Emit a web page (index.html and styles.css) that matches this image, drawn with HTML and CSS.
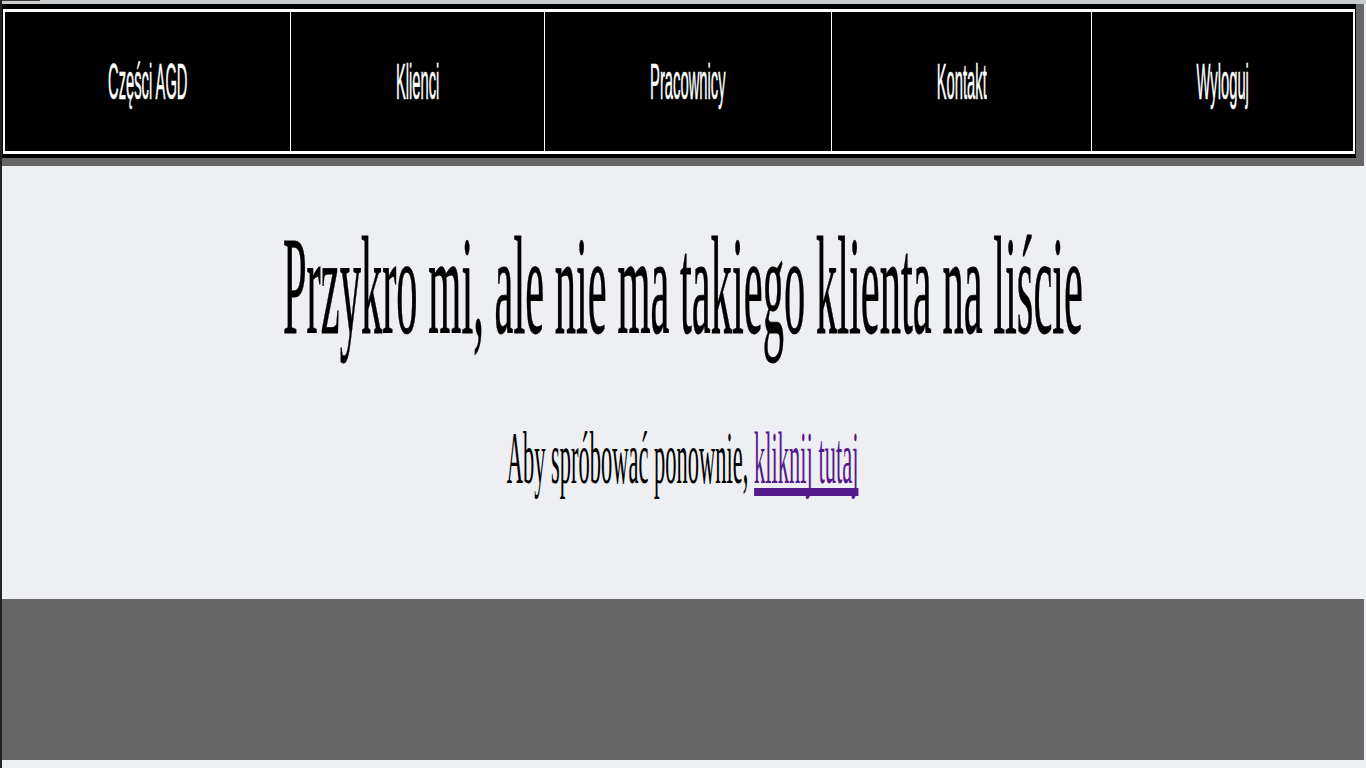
FILE: index.html
```html
<!DOCTYPE html>
<html lang="pl">
<head>
<meta charset="utf-8">
<title>Brak klienta</title>
<link rel="stylesheet" href="styles.css">
</head>
<body>
<div class="edge"></div>
<div class="page">
  <div class="topstrip"><div class="tab"></div></div>
  <div class="content">
    <header class="header">
      <nav class="nav">
        <div class="nav-grid">
          <a class="nav-item" href="#"><span class="squeeze">Części AGD</span></a>
          <a class="nav-item" href="#"><span class="squeeze">Klienci</span></a>
          <a class="nav-item" href="#"><span class="squeeze">Pracownicy</span></a>
          <a class="nav-item" href="#"><span class="squeeze">Kontakt</span></a>
          <a class="nav-item" href="#"><span class="squeeze">Wyloguj</span></a>
        </div>
      </nav>
    </header>
    <main class="main">
      <h1 class="title"><span class="squeeze squeeze-wide">Przykro mi, ale nie ma takiego klienta na liście</span></h1>
      <p class="retry"><span class="squeeze squeeze-wide">Aby spróbować ponownie, <a class="link" href="#">kliknij tutaj</a></span></p>
    </main>
    <footer class="footer"></footer>
  </div>
</div>
</body>
</html>
```
FILE: styles.css
```css
html, body {
  margin: 0;
  padding: 0;
}
body {
  background: #eeeff2;
  display: flex;
  min-height: 100vh;
  overflow: hidden;
}
.edge {
  width: 2px;
  flex: none;
  background: #1f2326;
}
.page {
  flex: 1;
  min-width: 0;
  overflow: hidden;
}
.topstrip {
  height: 4px;
  background: #c9cccf;
}
.tab {
  width: 38px;
  height: 1px;
  background: #3a3a3a;
}
.content {
  margin-right: 2px;
}
.header {
  background: #666666;
  padding: 0 8px 8px 0;
}
.nav {
  background: #000;
  padding: 5px 1px 4px 1px;
}
.nav-grid {
  display: grid;
  grid-template-columns: 285fr 254fr 287fr 260fr 262fr;
  border: 2px solid #fff;
  border-top-width: 3px;
  border-bottom-width: 3px;
  height: 139px;
}
.nav-item {
  display: flex;
  align-items: center;
  justify-content: center;
  overflow: visible;
  color: #fff;
  text-decoration: none;
  font-family: "Liberation Sans", Arial, sans-serif;
  font-size: 50px;
  line-height: 50px;
  border-left: 1px solid #fff;
  min-width: 0;
  -webkit-text-stroke: 0.6px #fff;
}
.nav-item:first-child {
  border-left: none;
}
.squeeze {
  display: inline-block;
  white-space: nowrap;
  transform: scaleX(0.295);
  transform-origin: center;
  flex: none;
}
.squeeze-wide {
  transform: scaleX(0.304);
}
.main {
  display: flex;
  flex-direction: column;
  align-items: center;
  padding: 40px 0 99px;
  font-family: "Liberation Serif", "Times New Roman", serif;
  color: #000;
}
.title {
  margin: 0;
  font-size: 140px;
  line-height: 160px;
  font-weight: normal;
  display: flex;
  justify-content: center;
  width: 100%;
  -webkit-text-stroke: 0.8px #000;
}
.retry {
  margin: 50px 0 0;
  font-size: 74px;
  line-height: 84px;
  display: flex;
  justify-content: center;
  width: 100%;
}
.link {
  color: #551a8b;
  text-decoration: underline;
  text-decoration-thickness: 8px;
  text-underline-offset: 5px;
  text-decoration-skip-ink: none;
}
.footer {
  height: 161px;
  background: #666666;
}
```
